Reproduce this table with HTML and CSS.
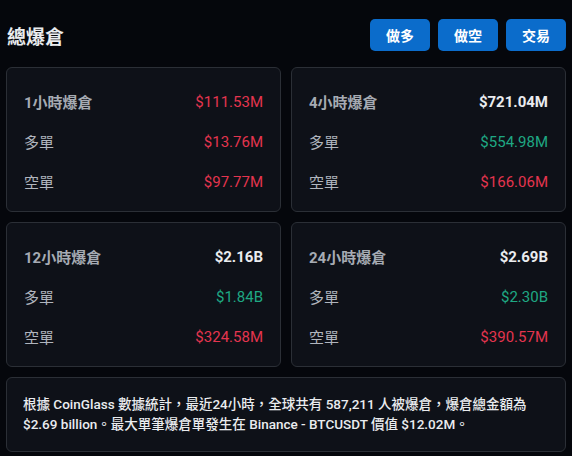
FILE: index.html
```html
<!DOCTYPE html>
<html lang="zh-Hant">
<head>
<meta charset="utf-8">
<link rel="stylesheet" href="styles.css">
</head>
<body>
<div class="page">
  <header class="header">
    <h1 class="title">總爆倉</h1>
    <div class="actions">
      <button class="btn">做多</button>
      <button class="btn">做空</button>
      <button class="btn">交易</button>
    </div>
  </header>
  <section class="grid">
    <div class="card">
      <div class="row head"><span class="label">1小時爆倉</span><span class="val red">$111.53M</span></div>
      <div class="row"><span class="label">多單</span><span class="val red">$13.76M</span></div>
      <div class="row"><span class="label">空單</span><span class="val red">$97.77M</span></div>
    </div>
    <div class="card">
      <div class="row head"><span class="label">4小時爆倉</span><span class="val white">$721.04M</span></div>
      <div class="row"><span class="label">多單</span><span class="val green">$554.98M</span></div>
      <div class="row"><span class="label">空單</span><span class="val red">$166.06M</span></div>
    </div>
    <div class="card">
      <div class="row head"><span class="label">12小時爆倉</span><span class="val white">$2.16B</span></div>
      <div class="row"><span class="label">多單</span><span class="val green">$1.84B</span></div>
      <div class="row"><span class="label">空單</span><span class="val red">$324.58M</span></div>
    </div>
    <div class="card">
      <div class="row head"><span class="label">24小時爆倉</span><span class="val white">$2.69B</span></div>
      <div class="row"><span class="label">多單</span><span class="val green">$2.30B</span></div>
      <div class="row"><span class="label">空單</span><span class="val red">$390.57M</span></div>
    </div>
  </section>
  <p class="note">根據 CoinGlass 數據統計，最近24小時，全球共有 587,211 人被爆倉，爆倉總金額為 $2.69 billion。最大單筆爆倉單發生在 Binance - BTCUSDT 價值 $12.02M。</p>
</div>
</body>
</html>
```
FILE: styles.css
```css
html, body {
  margin: 0;
  padding: 0;
  background: #05070c;
}
body {
  font-family: Roboto, "Noto Sans CJK TC", sans-serif;
  color: #eaecef;
}
.page {
  padding: 0 6px;
}
.header {
  display: flex;
  align-items: center;
  justify-content: space-between;
  height: 70px;
}
.title {
  margin: 0 0 0 1px;
  font-size: 19px;
  font-weight: 700;
  color: #eaecef;
  font-family: "Noto Sans CJK TC", sans-serif;
}
.actions {
  display: flex;
  gap: 8px;
  margin-top: -1px;
}
.btn {
  width: 60px;
  height: 32px;
  border: 0;
  border-radius: 5px;
  background: #0b6ccb;
  color: #fff;
  font-family: "Noto Sans CJK TC", sans-serif;
  font-weight: 700;
  font-size: 14px;
  padding: 0;
}
.grid {
  display: grid;
  grid-template-columns: 1fr 1fr;
  gap: 10px;
  margin-top: -3px;
}
.card {
  background: #0e1118;
  border: 1px solid #2b2f36;
  border-radius: 6px;
  padding: 14px 17px 9px;
}
.row {
  height: 41px;
  display: flex;
  align-items: center;
  justify-content: space-between;
  margin-top: -1px;
}
.label {
  font-size: 15px;
  color: #b0b5bd;
}
.head .label {
  font-weight: 700;
  color: #a6abb3;
}
.val {
  font-size: 15px;
}
.head .val.white { font-weight: 700; }
.red { color: #e4354f; }
.green { color: #1fa883; }
.white { color: #eaecef; }
.note {
  margin: 10px 0 0;
  background: #0e1118;
  border: 1px solid #2b2f36;
  border-radius: 6px;
  padding: 17px 16px 17px;
  font-size: 13.5px;
  font-weight: 500;
  line-height: 19.5px;
  color: #eaecef;
}
```
